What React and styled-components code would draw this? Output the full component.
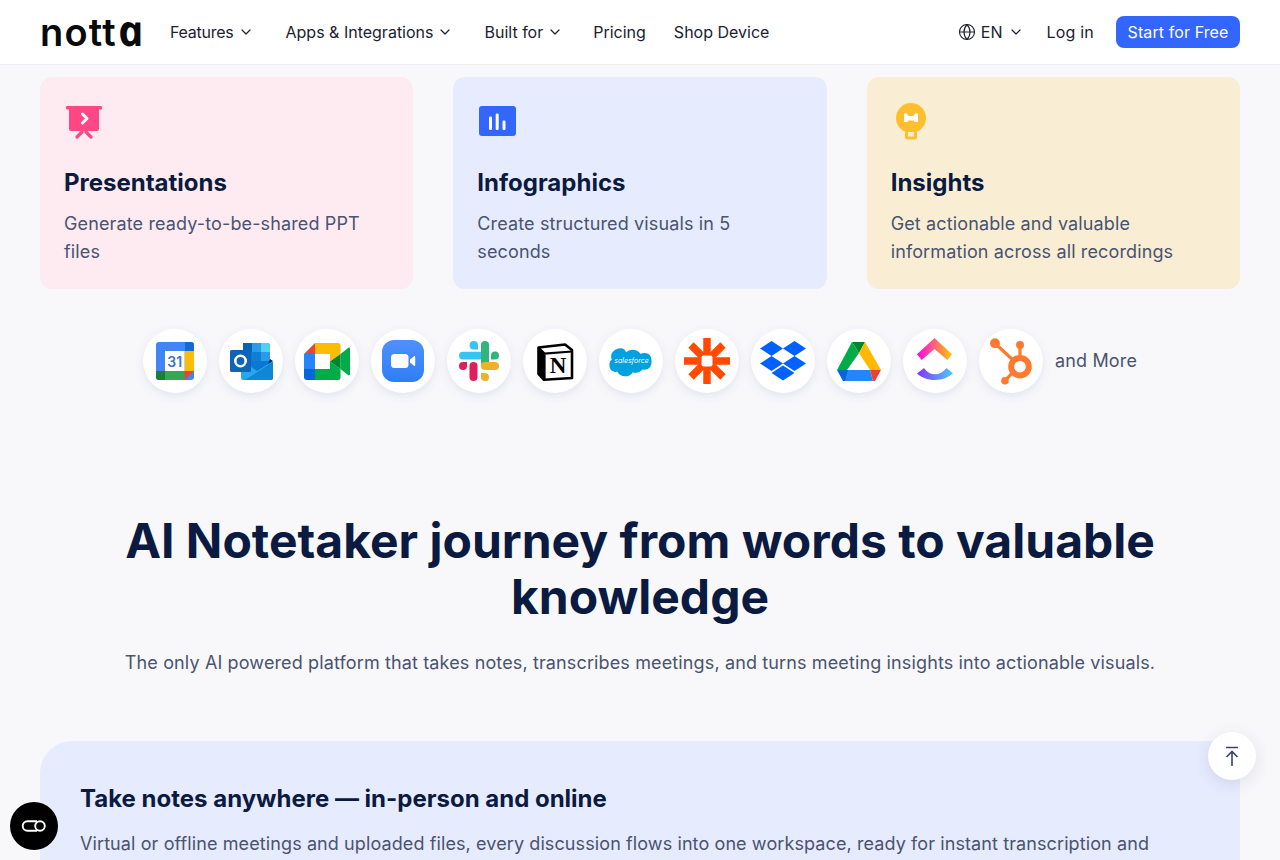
import React from "react";
import styled, { createGlobalStyle } from "styled-components";
import { ChevronDown, Globe } from "lucide-react";

const Reset = createGlobalStyle`
  html, body { margin: 0; height: 100%; background: #f8f8fb; overflow: hidden; }
  body { font-family: Inter, "Liberation Sans", sans-serif; }
  * { box-sizing: border-box; }
`;
const Page = styled.div`height: 860px; overflow: hidden; color: #0b1a40;`;
const Header = styled.header`
  height: 65px; background: #fff; border-bottom: 1px solid #ececf1;
  display: flex; align-items: center; justify-content: space-between; padding: 0 40px;
`;
const Left = styled.div`display: flex; align-items: center;`;
const Logo = styled.span`
  display: flex; align-items: baseline; font-size: 38px; line-height: 40px; font-weight: 600; color: #0a0a0a;
  width: 100px; height: 40px; letter-spacing: 1.2px; margin-top: -5px; white-space: nowrap;
`;
const LogoA = styled.span`
  display: inline-block; font-family: "Open Sans", sans-serif; font-style: italic; font-weight: 700;
  font-size: 43px; letter-spacing: 0; transform: skewX(12deg);
`;
const Nav = styled.nav`display: flex; align-items: center; margin-left: 30px;`;
const NavItem = styled.a`
  display: flex; align-items: center; gap: 4px; font-size: 16px; line-height: 24px; color: #1c2130;
  margin-right: ${(p) => p.$gap}px; letter-spacing: ${(p) => p.$ls || 0}px; white-space: nowrap;
`;
const Right = styled.div`display: flex; align-items: center;`;
const Lang = styled.div`display: flex; align-items: center; font-size: 16px; color: #1c2130; gap: 5px; margin-right: 23px;`;
const Login = styled.a`font-size: 16px; color: #1c2130; margin-right: 22px; letter-spacing: .2px;`;
const Cta = styled.a`
  height: 32px; width: 124px; background: #3366ff; color: #fff; border-radius: 8px; font-size: 16px;
  display: flex; align-items: center; justify-content: center; letter-spacing: .1px;
`;
const Main = styled.main`padding: 12px 40px 0;`;
const Cards = styled.div`display: grid; grid-template-columns: repeat(3, 1fr); gap: 40px;`;
const Card = styled.article`
  background: ${(p) => p.$bg}; border-radius: 12px; padding: 24px; height: 212px;
`;
const CardIcon = styled.svg`display: block; width: 40px; height: 40px; margin-bottom: 26px;`;
const CardTitle = styled.h3`margin: 0 0 11px; font-size: 24px; line-height: 32px; font-weight: 700; color: #0b1a40;`;
const CardText = styled.p`margin: 0; font-size: 18px; line-height: 28px; letter-spacing: .13px; color: #4a5370;`;
const Integrations = styled.div`display: flex; justify-content: center; align-items: center; gap: 12px; margin-top: 40px;`;
const Circle = styled.div`
  width: 64px; height: 64px; border-radius: 50%; background: #fff; box-shadow: 0 3px 10px rgba(70, 80, 150, .12);
  svg { display: block; width: 64px; height: 64px; }
`;
const More = styled.span`font-size: 18px; line-height: 28px; letter-spacing: .17px; color: #4a5370;`;
const Journey = styled.section`margin-top: 120px; text-align: center;`;
const H2 = styled.h2`margin: 0 auto; width: 1100px; font-size: 48px; line-height: 56px; font-weight: 700; color: #0b1a40;`;
const Sub = styled.p`margin: 24px 0 0; font-size: 18px; line-height: 28px; letter-spacing: .13px; color: #4a5370;`;
const Panel = styled.section`
  margin-top: 64px; background: #e6ebfe; border-radius: 32px 32px 0 0; padding: 40px; height: 300px;
`;
const PanelTitle = styled.h3`margin: 0 0 13px; font-size: 24px; line-height: 36px; font-weight: 700; color: #0b1a40;`;
const PanelText = styled.p`margin: 0; font-size: 18px; line-height: 28px; letter-spacing: .1px; color: #4a5370;`;
const ChatBtn = styled.button`
  position: fixed; left: 10px; top: 802px; width: 48px; height: 48px; border-radius: 50%; border: 0; padding: 0;
  background: #000; display: flex; align-items: center; justify-content: center;
`;
const TopBtn = styled.button`
  position: fixed; left: 1208px; top: 732px; width: 48px; height: 48px; border-radius: 50%; border: 0; padding: 0;
  background: #fff; display: flex; align-items: center; justify-content: center; box-shadow: 0 4px 16px rgba(50, 50, 90, .12);
`;

const features = [
  {
    bg: "#feebf1", title: "Presentations", text: "Generate ready-to-be-shared PPT files",
    icon: (
      <>
        <rect x="2" y="5" width="36" height="3.4" rx="1.2" fill="#ff4785" />
        <path d="M5 7h30v21a2 2 0 0 1-2 2H7a2 2 0 0 1-2-2z" fill="#ff4785" />
        <path d="M13 36l5-5M27 36l-5-5" stroke="#ff4785" strokeWidth="3.2" strokeLinecap="round" fill="none" />
        <path d="M18.5 13l4.500 4.500-4.500 4.500" stroke="#fff" strokeWidth="3" strokeLinecap="round" strokeLinejoin="round" fill="none" />
      </>
    ),
  },
  {
    bg: "#e6ebfe", title: "Infographics", text: "Create structured visuals in 5 seconds",
    icon: (
      <>
        <rect x="2" y="5" width="37" height="30" rx="3" fill="#3366ff" />
        <rect x="12" y="15.5" width="3" height="13.5" rx="1.2" fill="#fff" />
        <rect x="18.7" y="12.5" width="3" height="16.5" rx="1.2" fill="#fff" />
        <rect x="25.5" y="19.5" width="3" height="9.5" rx="1.2" fill="#fff" />
      </>
    ),
  },
  {
    bg: "#f9eed3", title: "Insights", text: "Get actionable and valuable information across all recordings",
    icon: (
      <>
        <circle cx="20" cy="17" r="15" fill="#ffbe2e" />
        <path d="M14 28h12v8a2.5 2.5 0 0 1-2.5 2.5h-7A2.5 2.5 0 0 1 14 36z" fill="#ffbe2e" />
        <rect x="17" y="31" width="6" height="4.600" fill="#f9eed3" />
        <path d="M13 12.500h3l1.500 2.500h5l1.500-2.500h3v8.500h-3l-1.500-1.500h-5l-1.500 1.500h-3z" fill="#fff" />
      </>
    ),
  },
];

const S = ({ children }) => <Circle><svg viewBox="0 0 64 64">{children}</svg></Circle>;

const logos = [
  <>
    <rect x="13" y="13" width="38" height="38" rx="3" fill="#4285f4" />
    <path d="M42 13h6a3 3 0 0 1 3 3v6h-9z" fill="#1967d2" />
    <rect x="41.5" y="22" width="9.5" height="20" fill="#fbbc04" />
    <path d="M22 42h20v9H22z" fill="#34a853" />
    <path d="M13 42h9v9h-6a3 3 0 0 1-3-3z" fill="#188038" />
    <path d="M41.5 42H51l-9.500 9z" fill="#ea4335" />
    <rect x="22" y="22" width="19.500" height="20" fill="#fff" />
    <text x="31.700" y="37.500" textAnchor="middle" fontSize="14" fontWeight="600" fill="#3b72d9" fontFamily="Inter, sans-serif">31</text>
  </>,
  <>
    <path d="M24 14h24a3 3 0 0 1 3 3v25H24z" fill="#0a78d4" />
    <rect x="33" y="14" width="9" height="9" fill="#2a9be8" />
    <path d="M42 14h6a3 3 0 0 1 3 3v6h-9z" fill="#4fd0fb" />
    <rect x="33" y="23" width="9" height="9" fill="#0f7fd6" />
    <rect x="42" y="23" width="9" height="9" fill="#2a9be8" />
    <path d="M24 14h9v9h-9z" fill="#0364b8" />
    <path d="M51 30l3 2-6 6z" fill="#0a2767" />
    <path d="M22 31l16 11 16-10v17a2 2 0 0 1-2 2H24a2 2 0 0 1-2-2z" fill="#28a8ea" />
    <path d="M26 51l28-18v16a2 2 0 0 1-2 2z" fill="#0f86d6" />
    <rect x="11" y="21" width="21" height="22" rx="1.500" fill="#0f65b5" />
    <circle cx="21.500" cy="32" r="5.200" fill="none" stroke="#fff" strokeWidth="2.600" />
  </>,
  <>
    <path d="M20 14h23a2.500 2.500 0 0 1 2.500 2.500V25L35 32.500V25H20z" fill="#fbbc04" />
    <path d="M20 14v11H9z" fill="#ea4335" />
    <rect x="9" y="25" width="11" height="15" fill="#2684fc" />
    <path d="M9 40h11v11h-8a3 3 0 0 1-3-3z" fill="#0066da" />
    <path d="M20 40h15v-7.500L45.500 40v8.500A2.500 2.500 0 0 1 43 51H20z" fill="#00ac47" />
    <path d="M45.500 25L53 19c1-.8 2-.3 2 1v25c0 1.300-1 1.800-2 1l-7.500-6z" fill="#00ac47" />
    <path d="M35 32.500l10.500-7.500v15z" fill="#00832d" />
  </>,
  <>
    <defs>
      <linearGradient id="zm" x1="0" y1="0" x2="0" y2="1"><stop offset="0" stopColor="#4f90ff" /><stop offset="1" stopColor="#2f7ef5" /></linearGradient>
    </defs>
    <rect x="11" y="11" width="42" height="42" rx="12" fill="url(#zm)" />
    <rect x="20" y="25" width="17.500" height="14" rx="3.500" fill="#fff" />
    <path d="M39 30.500l4-3.300c.6-.5 1.200-.2 1.200.5v8.600c0 .7-.6 1-1.200.5l-4-3.300z" fill="#fff" />
  </>,
  <>
    <rect x="12" y="22.700" width="25" height="7.800" rx="3.900" fill="#36c5f0" />
    <path d="M31 20.500h-4.500A4.200 4.200 0 1 1 31 16z" fill="#36c5f0" />
    <rect x="34" y="12" width="8" height="25" rx="4" fill="#2eb67d" />
    <path d="M44 30.500V26a4 4 0 1 1 4 4.500z" fill="#2eb67d" />
    <rect x="34" y="33" width="18" height="8" rx="4" fill="#ecb22e" />
    <path d="M34 44h4.200a4 4 0 1 1-4.200 4z" fill="#ecb22e" />
    <rect x="22.500" y="33" width="8" height="19" rx="4" fill="#e01e5a" />
    <path d="M20 33v4a4 4 0 1 1-4-4z" fill="#e01e5a" />
  </>,
  <>
    <path d="M15.500 18.500L42 15.500l7 5.500v28l-28 1.800-5.500-6z" fill="#fff" stroke="#000" strokeWidth="2.600" strokeLinejoin="round" />
    <path d="M15.500 18.500l6 6L49 22.500M21.500 24.500v26" fill="none" stroke="#000" strokeWidth="2.200" />
    <path d="M15.500 18.500v26l5.500 6v-26z" fill="#000" />
    <text x="35" y="44" textAnchor="middle" fontSize="23" fontWeight="700" fill="#000" fontFamily="Liberation Serif, serif">N</text>
  </>,
  <>
    <path d="M27 21.500c1.700-1.800 4-2.900 6.600-2.900 3.400 0 6.400 1.900 8 4.700 1.400-.6 2.900-.9 4.400-.9 5.300 0 7 4.600 7 10s-2 10-7.500 10c-.7 0-1.300-.1-2-.2-1.300 2.300-3.700 3.800-6.500 3.800-1.200 0-2.300-.3-3.200-.7-1.300 3-4.300 5-7.800 5-3.600 0-6.700-2.300-7.900-5.500-.5.1-1.100.2-1.600.2-4.300 0-6.500-3.500-6.500-7.800 0-2.900 0-5.400 2.500-6.800-.5-1.200-.8-2.500-.8-3.800 0-5.400 4.400-9.800 9.800-9.800 3.200 0 4.800 2.300 5.500 4.700z" fill="#00a1e0" transform="translate(32 32) scale(.98 .84) translate(-32 -32)" />
    <text x="32.500" y="34" textAnchor="middle" fontSize="7" fontStyle="italic" fill="#fff" fontFamily="Inter, sans-serif">salesforce</text>
  </>,
  <>
    <path d="M32 9v46M9 32h46" stroke="#ff4a00" strokeWidth="7.500" fill="none" />
    <path d="M16 16l32 32M48 16L16 48" stroke="#ff4a00" strokeWidth="7.500" fill="none" />
    <rect x="26.500" y="26.500" width="11" height="11" rx="2" fill="#fff" />
  </>,
  <>
    <g fill="#0061ff">
      <path d="M20.500 12L32 19.500 20.500 27 9 19.500z" />
      <path d="M43.500 12L55 19.500 43.500 27 32 19.500z" />
      <path d="M20.500 27L32 34.500 20.500 42 9 34.500z" />
      <path d="M43.500 27L55 34.500 43.500 42 32 34.500z" />
      <path d="M32 36.500L43.500 44 32 51.500 20.500 44z" />
    </g>
  </>,
  <>
    <path d="M25 13h13l-6 11z" fill="#00832d" />
    <path d="M25 13l7 11-12 17H10z" fill="#00ac47" />
    <path d="M38 13l16 28H43L32 24z" fill="#ffba00" />
    <path d="M10 41h11l1 11h-6z" fill="#0066da" />
    <path d="M21 41h22l3 11H18z" fill="#2684fc" />
    <path d="M43 41h11l-6 11h-2z" fill="#ea4335" />
  </>,
  <>
    <defs>
      <linearGradient id="cu1" x1="0" y1="0" x2="1" y2="0"><stop offset="0" stopColor="#ff02f0" /><stop offset="1" stopColor="#ffc800" /></linearGradient>
      <linearGradient id="cu2" x1="0" y1="0" x2="1" y2="0"><stop offset="0" stopColor="#8930fd" /><stop offset="1" stopColor="#49ccf9" /></linearGradient>
    </defs>
    <path d="M31.500 9L49 25.300 44.300 31 31.500 20 18.700 31 14 25.300z" fill="url(#cu1)" />
    <path d="M14 44.500L21 39c3 4 6.500 6.300 11 6.300s8-2.300 11.500-6.300l6.500 5.300C45.500 48.500 39.500 51 32 51s-13.500-2.500-18-6.500z" fill="url(#cu2)" />
  </>,
  <>
    <g stroke="#ff7a2f" fill="none">
      <circle cx="41" cy="37.700" r="8.800" strokeWidth="6" />
      <path d="M16 14.300L34 31M41 16v14M26 51.700l8-8.500" strokeWidth="3.200" />
    </g>
    <g fill="#ff7a2f">
      <circle cx="16" cy="14.300" r="5" />
      <circle cx="41" cy="16" r="4" />
      <circle cx="26" cy="51.700" r="3.800" />
    </g>
  </>,
];

export default function App() {
  return (
    <Page>
      <Reset />
      <Header>
        <Left>
          <Logo>nott<LogoA>a</LogoA></Logo>
          <Nav>
            <NavItem $gap={32} $ls={-0.25}>Features <ChevronDown size={16} strokeWidth={1.8} /></NavItem>
            <NavItem $gap={31}>Apps &amp; Integrations <ChevronDown size={16} strokeWidth={1.8} /></NavItem>
            <NavItem $gap={30}>Built for <ChevronDown size={16} strokeWidth={1.8} /></NavItem>
            <NavItem $gap={28}>Pricing</NavItem>
            <NavItem $gap={0}>Shop Device</NavItem>
          </Nav>
        </Left>
        <Right>
          <Lang><Globe size={18} strokeWidth={1.5} /> EN <ChevronDown size={16} strokeWidth={1.8} /></Lang>
          <Login>Log in</Login>
          <Cta>Start for Free</Cta>
        </Right>
      </Header>
      <Main>
        <Cards>
          {features.map((f) => (
            <Card key={f.title} $bg={f.bg}>
              <CardIcon viewBox="0 0 40 40">{f.icon}</CardIcon>
              <CardTitle>{f.title}</CardTitle>
              <CardText>{f.text}</CardText>
            </Card>
          ))}
        </Cards>
        <Integrations>
          {logos.map((l, i) => <S key={i}>{l}</S>)}
          <More>and More</More>
        </Integrations>
        <Journey>
          <H2>AI Notetaker journey from words to valuable knowledge</H2>
          <Sub>The only AI powered platform that takes notes, transcribes meetings, and turns meeting insights into actionable visuals.</Sub>
        </Journey>
        <Panel>
          <PanelTitle>Take notes anywhere — in-person and online</PanelTitle>
          <PanelText>Virtual or offline meetings and uploaded files, every discussion flows into one workspace, ready for instant transcription and analysis.</PanelText>
        </Panel>
      </Main>
      <ChatBtn aria-label="Open chat">
        <svg width="28" height="14" viewBox="0 0 28 14" fill="none" stroke="#fff" strokeWidth="1.900">
          <path d="M17 2.200H7.500a4.800 4.800 0 0 0 0 9.600H17" />
          <circle cx="20" cy="7" r="4.800" />
        </svg>
      </ChatBtn>
      <TopBtn aria-label="Back to top">
        <svg width="24" height="24" viewBox="0 0 24 24" fill="none" stroke="#3a4461" strokeWidth="1.600">
          <path d="M6 3.500h12M12 22V8M6.500 13L12 7.500l5.500 5.500" />
        </svg>
      </TopBtn>
    </Page>
  );
}
